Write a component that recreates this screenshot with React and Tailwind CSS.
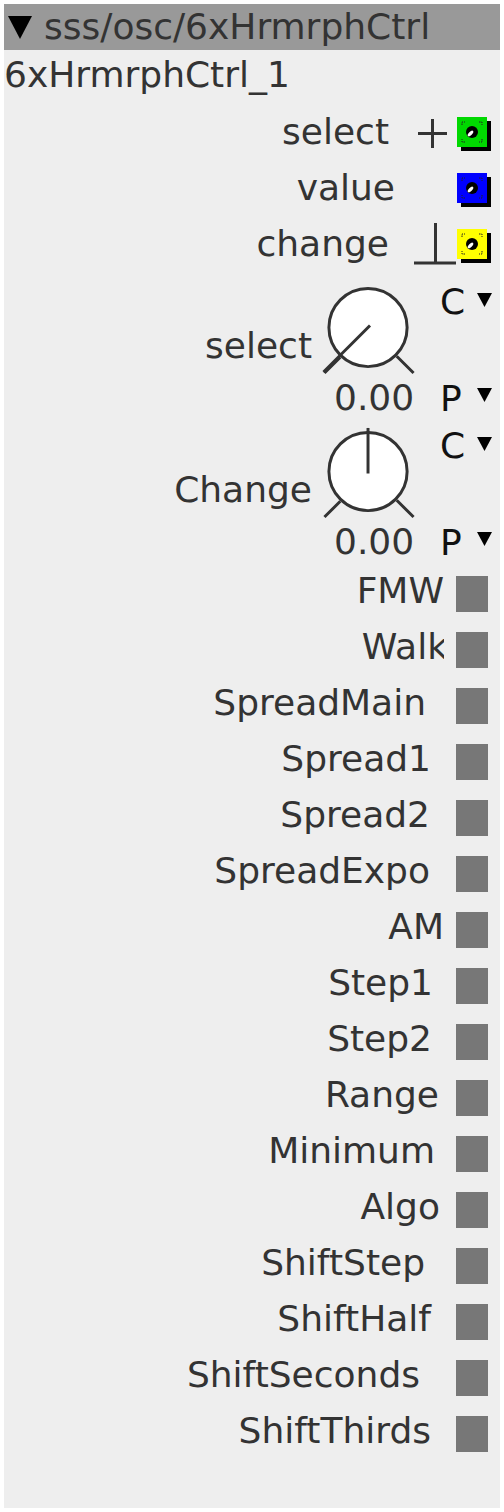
const ports = [
  { label: 'select', color: 'bg-[#00d800]', sym: 'plus', mr: 'mr-[25px]' },
  { label: 'value', color: 'bg-[#0000ff]', sym: null, mr: 'mr-[19px]' },
  { label: 'change', color: 'bg-[#ffff00]', sym: 'ground', mr: 'mr-[25px]' },
];

const toggles = [
  { label: 'FMW', mr: 'mr-[0px]' },
  { label: 'Walk', mr: '-mr-[4px]' },
  { label: 'SpreadMain', mr: 'mr-[18px]' },
  { label: 'Spread1', mr: 'mr-[13px]' },
  { label: 'Spread2', mr: 'mr-[14px]' },
  { label: 'SpreadExpo', mr: 'mr-[14px]' },
  { label: 'AM', mr: 'mr-[0px]' },
  { label: 'Step1', mr: 'mr-[11px]' },
  { label: 'Step2', mr: 'mr-[12px]' },
  { label: 'Range', mr: 'mr-[5px]' },
  { label: 'Minimum', mr: 'mr-[9px]' },
  { label: 'Algo', mr: 'mr-[4px]' },
  { label: 'ShiftStep', mr: 'mr-[19px]' },
  { label: 'ShiftHalf', mr: 'mr-[13px]' },
  { label: 'ShiftSeconds', mr: 'mr-[24px]' },
  { label: 'ShiftThirds', mr: 'mr-[13px]' },
];

function Tri({ className }) {
  return (
    <svg className={className} width="15" height="14" viewBox="0 0 15 14">
      <polygon points="0,0 15,0 7.5,14" fill="#000" />
    </svg>
  );
}

function PortSymbol({ sym }) {
  return (
    <svg width="43" height="56" viewBox="0 0 43 56" fill="none" stroke="#333" strokeWidth="3">
      {sym === 'plus' && <path d="M4 29.5 H33 M18.5 15 V44" />}
      {sym === 'ground' && <path d="M21.5 7 V47 M0 47 H42" />}
    </svg>
  );
}

function Jack() {
  return (
    <svg width="30" height="30" viewBox="0 0 30 30">
      <path
        d="M5 8 V5 H8 M22 5 H25 V8 M25 22 V25 H22 M8 25 H5 V22"
        fill="none"
        stroke="#222"
        strokeWidth="1"
        strokeDasharray="1.5 1"
      />
      <circle cx="15" cy="15" r="6" fill="#000" />
      <ellipse cx="13.5" cy="16.5" rx="1.6" ry="3.6" fill="#fff" transform="rotate(45 13.5 16.5)" />
    </svg>
  );
}

function Knob({ label, vertical }) {
  return (
    <div className="flex h-[144px] pr-[8px]">
      <div className="flex-1 text-right pt-[56px] pr-[8px] leading-none">{label}</div>
      <div className="w-[100px] flex flex-col mr-[20px]">
        <svg className="mt-[8px]" width="100" height="100" viewBox="0 0 100 100" fill="none" stroke="#333" strokeWidth="3">
          <circle cx="48" cy="48" r="39.5" fill="#fff" />
          <path d="M4 94 L20 78 M77 77 L94 94" />
          {vertical ? <path d="M48 50 V4" /> : <path d="M50 46 L3 93" />}
        </svg>
        <div className="mt-[1px] pl-[14px] leading-none">0.00</div>
      </div>
      <div className="w-[52px] flex flex-col leading-none text-[#111]">
        <div className="flex items-start pt-[12px]">
          <span className="w-[37px]">C</span>
          <Tri className="mt-[9px]" />
        </div>
        <div className="flex items-start mt-[61px]">
          <span className="w-[37px]">P</span>
          <Tri className="mt-[7px]" />
        </div>
      </div>
    </div>
  );
}

export default function App() {
  return (
    <div className="w-[504px] h-[1512px] bg-white p-[4px] font-['DejaVu_Sans',sans-serif] text-[#333]">
      <div className="w-[496px] h-[1504px] bg-[#eeeeee] overflow-hidden text-[36px]">
        {/* header */}
        <div className="h-[46px] bg-[#999999] flex items-center pl-[4px] leading-none">
          <svg width="24" height="23" viewBox="0 0 24 23">
            <polygon points="0,0 24,0 12,23" fill="#000" />
          </svg>
          <span className="ml-[12px]">sss/osc/6xHrmrphCtrl</span>
        </div>

        <div className="h-[54px] pt-[7px] leading-none">6xHrmrphCtrl_1</div>

        {/* ports */}
        {ports.map((p) => (
          <div key={p.label} className="h-[56px] flex items-center justify-end pr-[13px] leading-none">
            <span className={p.mr}>{p.label}</span>
            <PortSymbol sym={p.sym} />
            <div className={`w-[30px] h-[30px] ${p.color} shadow-[4px_4px_0_0_#000]`}>
              <Jack />
            </div>
          </div>
        ))}

        {/* knobs */}
        <Knob label="select" />
        <Knob label="Change" vertical />

        {/* toggles */}
        <div className="pt-[6px]">
          {toggles.map((t) => (
            <div key={t.label} className="h-[56px] flex items-center pr-[12px]">
              <div className="flex-1 min-w-0 overflow-x-clip flex justify-end mr-[12px] pb-[6px] leading-[1.2]">
                <span className={`shrink-0 whitespace-nowrap ${t.mr}`}>{t.label}</span>
              </div>
              <div className="w-[32px] h-[36px] bg-[#777777]" />
            </div>
          ))}
        </div>
      </div>
    </div>
  );
}
